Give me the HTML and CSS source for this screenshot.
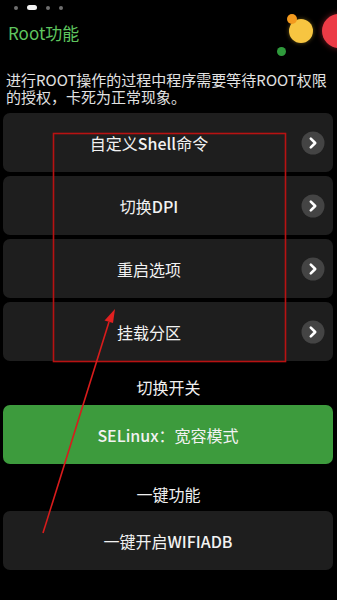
FILE: index.html
```html
<!DOCTYPE html>
<html lang="zh">
<head>
<meta charset="utf-8">
<link rel="stylesheet" href="styles.css">
</head>
<body>
<div class="page">
  <div class="pager">
    <span class="dot"></span>
    <span class="dot active"></span>
    <span class="dot"></span>
    <span class="dot"></span>
  </div>
  <div class="bubbles">
    <span class="b b-red"></span>
    <span class="b b-yellow"></span>
    <span class="b b-orange"></span>
    <span class="b b-green"></span>
  </div>
  <h1 class="title">Root功能</h1>
  <p class="desc">进行ROOT操作的过程中程序需要等待ROOT权限的授权，卡死为正常现象。</p>
  <div class="list">
    <div class="card"><span class="label">自定义<span class="lat">Shell</span>命令</span><svg class="go" width="24" height="24" viewBox="0 0 24 24"><circle cx="12" cy="12" r="11.5" fill="#444"/><path d="M9.8 7.6 L14.2 12 L9.8 16.4" fill="none" stroke="#fff" stroke-width="2.6" stroke-linecap="round" stroke-linejoin="round"/></svg></div>
    <div class="card"><span class="label">切换<span class="lat">DPI</span></span><svg class="go" width="24" height="24" viewBox="0 0 24 24"><circle cx="12" cy="12" r="11.5" fill="#444"/><path d="M9.8 7.6 L14.2 12 L9.8 16.4" fill="none" stroke="#fff" stroke-width="2.6" stroke-linecap="round" stroke-linejoin="round"/></svg></div>
    <div class="card"><span class="label">重启选项</span><svg class="go" width="24" height="24" viewBox="0 0 24 24"><circle cx="12" cy="12" r="11.5" fill="#444"/><path d="M9.8 7.6 L14.2 12 L9.8 16.4" fill="none" stroke="#fff" stroke-width="2.6" stroke-linecap="round" stroke-linejoin="round"/></svg></div>
    <div class="card"><span class="label">挂载分区</span><svg class="go" width="24" height="24" viewBox="0 0 24 24"><circle cx="12" cy="12" r="11.5" fill="#444"/><path d="M9.8 7.6 L14.2 12 L9.8 16.4" fill="none" stroke="#fff" stroke-width="2.6" stroke-linecap="round" stroke-linejoin="round"/></svg></div>
  </div>
  <div class="section">切换开关</div>
  <div class="list"><div class="card green"><span class="label full"><span class="lat">SELinux</span>：宽容模式</span></div></div>
  <div class="section second">一键功能</div>
  <div class="list"><div class="card"><span class="label full">一键开启<span class="lat">WIFIADB</span></span></div></div>
  <svg class="annot" width="337" height="600" viewBox="0 0 337 600">
    <rect x="53.5" y="133.5" width="232" height="228" fill="none" stroke="#b81212" stroke-width="1.6"/>
    <line x1="43" y1="533" x2="109" y2="322" stroke="#d81c1c" stroke-width="1.6"/>
    <path d="M115 309 L104.5 320.5 L113 323 Z" fill="#e02020"/>
  </svg>
</div>
</body>
</html>
```
FILE: styles.css
```css
* { box-sizing: border-box; }
html, body { margin: 0; padding: 0; background: #000; }
body {
  width: 337px;
  height: 600px;
  overflow: hidden;
  font-family: "Noto Sans CJK SC", "Noto Sans", sans-serif;
  color: #eee;
}
.page { position: relative; height: 600px; overflow: hidden; }
.pager {
  display: flex;
  align-items: center;
  gap: 9px;
  padding: 5px 0 0 14px;
  height: 10px;
}
.dot { width: 4px; height: 4px; border-radius: 50%; background: #6f6f6f; }
.dot.active { width: 10px; height: 5px; border-radius: 3px; background: #f2f2f2; }
.bubbles { position: absolute; top: 0; right: 0; width: 70px; height: 70px; overflow: hidden; }
.b { position: absolute; border-radius: 50%; }
.b-orange { left: 20px; top: 14px; width: 10px; height: 10px; background: #f39a1e; }
.b-yellow { left: 22px; top: 19px; width: 24px; height: 24px; background: #f7c541; box-shadow: 0 0 4px rgba(247,197,65,0.4); }
.b-red { left: 55px; top: 14px; width: 34px; height: 34px; background: #ec3b46; box-shadow: 0 0 6px rgba(236,59,70,0.5); }
.b-green { left: 10px; top: 47px; width: 9px; height: 9px; background: #2f9a3c; }
.title {
  margin: 11px 0 0 8px;
  font-size: 17px;
  line-height: 23px;
  font-weight: 400;
  color: #5fc55f;
}
.desc {
  margin: 27px 0 0 0;
  padding: 0 6px;
  font-size: 15px;
  line-height: 17px;
  color: #e2e2e2;
}
.list {
  display: flex;
  flex-direction: column;
  gap: 4px;
  padding: 0 4px 0 3px;
  margin-top: 8px;
}
.card {
  height: 59px;
  display: flex;
  align-items: center;
  background: #1e1e1e;
  border-radius: 7px;
}
.label {
  flex: 1;
  text-align: center;
  padding-right: 6px;
  font-size: 16px;
  font-weight: 400;
  color: #f2f2f2;
}
.lat { font-weight: 500; }
.label.full { padding-right: 0; }
.go { margin-right: 8px; flex: none; }
.green { background: #3d9b3d; }
.section {
  margin-top: 16px;
  text-align: center;
  font-size: 16px;
  line-height: 20px;
  color: #f0f0f0;
}
.section + .list { margin-top: 8px; }
.section.second { margin-top: 20px; }
.section.second + .list { margin-top: 7px; }
.annot { position: absolute; left: 0; top: 0; pointer-events: none; }
```
